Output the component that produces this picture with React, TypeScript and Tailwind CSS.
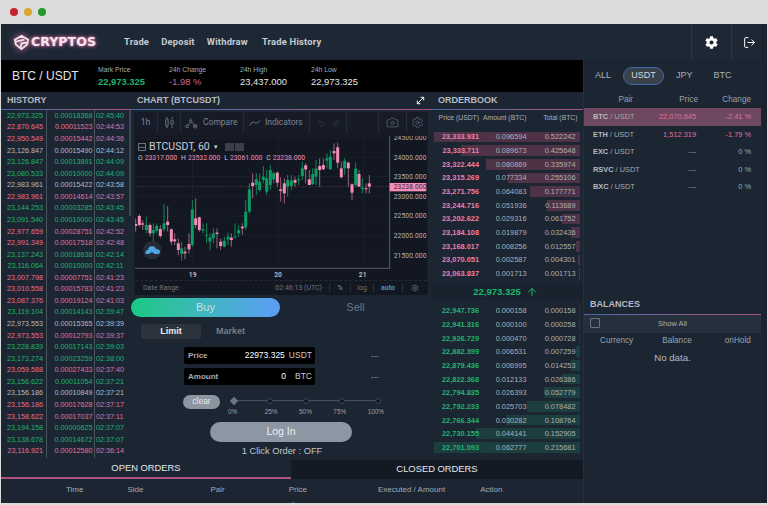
import React from 'react';
import { ArrowUp, Camera, LogOut, MoveDiagonal, Redo2, Settings, Undo2 } from 'lucide-react';
import { FaCog } from 'react-icons/fa';

type Side = 'g' | 'p' | 'w';

const history: [string, string, string, Side][] = [
  ['22,973.325', '0.00018368', '02:45:40', 'g'],
  ['22,870.645', '0.00011523', '02:44:53', 'p'],
  ['22,950.549', '0.00015442', '02:44:36', 'p'],
  ['23,126.847', '0.00015490', '02:44:12', 'w'],
  ['23,126.847', '0.00013891', '02:44:09', 'g'],
  ['23,080.533', '0.00010000', '02:44:09', 'g'],
  ['22,983.961', '0.00015422', '02:43:58', 'w'],
  ['22,983.961', '0.00014614', '02:43:57', 'p'],
  ['23,144.253', '0.00003285', '02:43:45', 'g'],
  ['23,091.540', '0.00010000', '02:43:45', 'g'],
  ['22,977.659', '0.00028751', '02:42:52', 'p'],
  ['22,991.349', '0.00017518', '02:42:48', 'p'],
  ['23,137.243', '0.00018638', '02:42:14', 'g'],
  ['23,116.064', '0.00010000', '02:42:11', 'g'],
  ['23,007.798', '0.00007751', '02:41:23', 'p'],
  ['23,010.558', '0.00015783', '02:41:23', 'p'],
  ['23,087.376', '0.00019124', '02:41:03', 'p'],
  ['23,119.104', '0.00014143', '02:39:47', 'g'],
  ['22,973.553', '0.00015365', '02:39:39', 'w'],
  ['22,973.553', '0.00012793', '02:39:37', 'p'],
  ['23,228.839', '0.00017143', '02:39:03', 'g'],
  ['23,173.274', '0.00023259', '02:38:00', 'g'],
  ['23,059.588', '0.00027433', '02:37:40', 'p'],
  ['23,156.622', '0.00011054', '02:37:21', 'g'],
  ['23,156.186', '0.00010849', '02:37:21', 'w'],
  ['23,156.186', '0.00017628', '02:37:17', 'p'],
  ['23,158.622', '0.00017037', '02:37:11', 'p'],
  ['23,194.158', '0.00000625', '02:37:07', 'g'],
  ['23,138.678', '0.00014672', '02:37:07', 'g'],
  ['23,116.921', '0.00012580', '02:36:14', 'p'],
];

const sideColor: Record<Side, string> = {
  g: 'text-[#1db56f]',
  p: 'text-[#e0719f]',
  w: 'text-[#b4bac2]',
};

// price, amount, total, depth bar width in px
const asks: [string, string, string, number][] = [
  ['23,333.931', '0.096594', '0.522242', 146],
  ['23,333.711', '0.089673', '0.425648', 119],
  ['23,322.444', '0.080869', '0.335974', 94],
  ['23,315.269', '0.077334', '0.255106', 72],
  ['23,271.756', '0.064083', '0.177771', 50],
  ['23,244.716', '0.051936', '0.113689', 33],
  ['23,202.622', '0.029316', '0.061752', 18],
  ['23,184.108', '0.019879', '0.032436', 9],
  ['23,168.017', '0.008256', '0.012557', 4],
  ['23,070.051', '0.002587', '0.004301', 2],
  ['23,063.837', '0.001713', '0.001713', 1],
];

const bids: [string, string, string, number][] = [
  ['22,947.736', '0.000158', '0.000158', 1],
  ['22,941.316', '0.000100', '0.000258', 1],
  ['22,926.729', '0.000470', '0.000728', 1],
  ['22,882.399', '0.006531', '0.007259', 4],
  ['22,879.436', '0.006995', '0.014253', 9],
  ['22,822.368', '0.012133', '0.026386', 18],
  ['22,794.835', '0.026393', '0.052779', 36],
  ['22,792.233', '0.025703', '0.078482', 53],
  ['22,766.344', '0.030282', '0.108764', 74],
  ['22,730.155', '0.044141', '0.152905', 104],
  ['22,701.093', '0.062777', '0.215681', 146],
];

const pairs = [
  { base: 'BTC', price: '22,070.645', change: '-2.41 %', down: true },
  { base: 'ETH', price: '1,512.319', change: '-1.79 %', down: true },
  { base: 'EXC', price: '---', change: '0 %', down: false },
  { base: 'RSVC', price: '---', change: '0 %', down: false },
  { base: 'BXC', price: '---', change: '0 %', down: false },
];

// x, wick top, wick bottom, body top, body bottom, colour (3x picture units)
type Candle = [number, number, number, number, number, 'g' | 'p'];

const lowerCandles: Candle[] = [
  [17, 55, 95, 72, 78, 'p'], [28, 42, 80, 48, 75, 'p'], [38, 60, 90, 70, 74, 'p'], [49, 50, 100, 75, 90, 'g'],
  [60, 70, 110, 75, 100, 'p'], [70, 70, 125, 90, 100, 'g'], [80, 70, 100, 78, 92, 'g'], [91, 75, 115, 87, 108, 'p'],
  [102, 12, 95, 70, 88, 'g'], [113, 18, 95, 65, 75, 'p'], [124, 85, 135, 88, 125, 'p'], [134, 100, 135, 118, 124, 'p'],
  [145, 115, 165, 130, 150, 'p'], [155, 125, 182, 145, 162, 'g'], [165, 140, 178, 155, 160, 'p'], [177, 100, 160, 132, 148, 'p'],
  [187, 0, 140, 28, 135, 'g'], [197, -5, 85, 55, 75, 'p'], [208, 50, 95, 52, 90, 'p'], [219, 70, 100, 88, 92, 'g'],
  [230, 70, 130, 104, 106, 'g'], [240, 100, 150, 112, 125, 'g'], [250, 85, 130, 100, 115, 'g'], [261, 85, 145, 98, 102, 'p'],
  [272, 115, 150, 125, 138, 'p'], [283, 110, 142, 122, 140, 'g'], [294, 98, 135, 110, 118, 'g'], [304, 100, 140, 113, 120, 'p'],
  [315, 70, 115, 110, 113, 'g'], [326, 75, 110, 90, 100, 'g'], [337, 70, 105, 80, 85, 'p'], [347, 0, 90, 35, 82, 'g'],
];

const upperCandles: Candle[] = [
  [358, 280, 370, 298, 365, 'g'], [368, 250, 325, 278, 288, 'p'], [379, 250, 315, 268, 285, 'g'], [389, 250, 305, 275, 300, 'g'],
  [400, 228, 280, 260, 270, 'g'], [410, 240, 315, 265, 305, 'g'], [421, 225, 300, 240, 285, 'g'], [431, 245, 280, 250, 268, 'g'],
  [442, 245, 290, 248, 278, 'p'], [452, 262, 335, 298, 303, 'p'], [463, 265, 340, 280, 310, 'p'], [473, 255, 320, 270, 290, 'g'],
  [484, 255, 300, 272, 288, 'g'], [495, 260, 290, 270, 278, 'p'], [506, 255, 285, 268, 270, 'g'], [517, 215, 270, 235, 258, 'g'],
  [527, 220, 280, 226, 238, 'p'], [538, 240, 285, 268, 285, 'p'], [548, 235, 285, 252, 282, 'g'], [558, 210, 285, 235, 260, 'g'],
  [569, 205, 290, 228, 240, 'p'], [580, 205, 240, 225, 238, 'p'], [591, 190, 235, 205, 212, 'g'], [601, 180, 240, 200, 238, 'g'],
  [612, 160, 210, 183, 190, 'p'], [623, 158, 235, 172, 218, 'p'], [634, 215, 265, 235, 262, 'p'], [644, 205, 255, 212, 235, 'g'],
  [655, 215, 290, 218, 235, 'p'], [666, 280, 330, 283, 308, 'p'], [677, 218, 290, 236, 285, 'g'], [687, 240, 290, 252, 290, 'p'],
  [697, 265, 310, 293, 297, 'g'], [708, 280, 310, 295, 298, 'p'], [718, 255, 310, 280, 290, 'p'],
];

const candles: Candle[] = [
  ...lowerCandles.map(([x, a, b, c, d, s]): Candle => [x, a + 330, b + 330, c + 330, d + 330, s]),
  ...upperCandles,
];

const axisPrices: [string, number][] = [
  ['24500.000', 144], ['24000.000', 202], ['23500.000', 260], ['23000.000', 320],
  ['22500.000', 378], ['22000.000', 436], ['21500.000', 498],
];

function Chart() {
  return (
    <svg viewBox="15 138 876 432" className="block w-[292px] h-[144px]">
      <rect x="15" y="138" width="876" height="432" fill="#131722" />
      {axisPrices.map(([, y]) => (
        <line key={y} x1="15" x2="778" y1={y} y2={y} stroke="#1f2431" strokeWidth="2" />
      ))}
      {[188, 444, 700].map((x) => (
        <line key={x} x1={x} x2={x} y1="138" y2="535" stroke="#1f2431" strokeWidth="2" />
      ))}
      <line x1="15" x2="778" y1="290" y2="290" stroke="#7a4a63" strokeWidth="2" strokeDasharray="2 3" />
      {candles.map(([x, a, b, c, d, s]) => {
        const color = s === 'g' ? '#0c9c63' : '#f48fb8';
        return (
          <g key={x}>
            <line x1={x} x2={x} y1={a} y2={b} stroke={s === 'g' ? '#0c9c63' : '#b86f90'} strokeWidth="2.5" />
            <rect x={x - 4.5} y={c} width="9" height={Math.max(d - c, 3)} fill={color} />
          </g>
        );
      })}
      <line x1="779" x2="779" y1="138" y2="536" stroke="#565b66" strokeWidth="3" />
      <line x1="15" x2="779" y1="535" y2="535" stroke="#565b66" strokeWidth="3" />
      {axisPrices.map(([label, y]) => (
        <text key={label} x="791" y={y + 7} fontSize="20" fill="#b2b5be" fontFamily="Roboto, sans-serif" letterSpacing="0.4">
          {label}
        </text>
      ))}
      <rect x="779" y="279" width="110" height="25" fill="#f48fb8" />
      <text x="791" y="298" fontSize="20" fill="#4a2436" fontFamily="Roboto, sans-serif" letterSpacing="0.4">
        23238.000
      </text>
      {[['19', 188], ['20', 444], ['21', 698]].map(([label, x]) => (
        <text key={label} x={x} y="561" textAnchor="middle" fontSize="20" fontWeight="700" fill="#b2b5be" fontFamily="Roboto, sans-serif">
          {label}
        </text>
      ))}
      <circle cx="67" cy="480" r="28" fill="#262b38" />
      <path
        d="M47 492 q-3 -11 7 -13 q2 -12 14 -10 q8 1 10 8 q11 0 12 8 q0 7 -9 7 l-8 0 q-5 -8 -12 -3 q-3 3 -6 3 z"
        fill="#4fa6e4"
      />
    </svg>
  );
}

function ToolDivider() {
  return <div className="w-px self-stretch bg-[#262c39]" />;
}

function PanelTitle({ children }: { children: React.ReactNode }) {
  return (
    <div className="h-[18px] shrink-0 flex flex-col">
      <div className="flex-1 flex items-center justify-between pl-[6px] pr-[5px] text-[9px] leading-none font-bold text-[#b4bac3]">
        {children}
      </div>
      <div className="h-px bg-gradient-to-r from-[#3f6aa8] to-[#a8527f]" />
    </div>
  );
}

function BookRow({ row, bar, price }: { row: [string, string, string, number]; bar: string; price: string }) {
  const [p, amount, total, width] = row;
  return (
    <div className="relative h-[13.68px] shrink-0 flex items-center text-[7.4px] text-[#aab0b8]">
      <div className={`absolute right-[3px] top-[1.5px] bottom-[1.5px] ${bar}`} style={{ width }} />
      <span className={`relative w-[47px] text-right font-bold ${price}`}>{p}</span>
      <span className="relative w-[47.5px] text-right">{amount}</span>
      <span className="relative w-[49px] text-right">{total}</span>
    </div>
  );
}

function History() {
  return (
    <div className="w-[130px] shrink-0 flex flex-col">
      <PanelTitle>HISTORY</PanelTitle>
      <div className="relative flex-1 flex flex-col pt-[0.5px]">
        <div className="absolute left-[128px] top-0 w-[2px] h-[106px] bg-[#3d4653]" />
        <div className="absolute left-[45px] top-0 bottom-[2px] w-px bg-[#4a5360]" />
        <div className="absolute left-[93px] top-0 bottom-[2px] w-px bg-[#4a5360]" />
        {history.map(([price, amount, time, side], i) => (
          <div key={i} className={`h-[11.57px] shrink-0 flex items-center text-[7.2px] ${sideColor[side]}`}>
            <span className="w-[42px] text-right">{price}</span>
            <span className="w-[49.5px] text-right">{amount}</span>
            <span className="ml-[3.5px] w-[30px]">{time}</span>
          </div>
        ))}
      </div>
    </div>
  );
}

function CenterPanel() {
  return (
    <div className="w-[301px] shrink-0 flex flex-col">
      <PanelTitle>
        <span>CHART (BTCUSDT)</span>
        <MoveDiagonal size={11} className="text-white mr-[1px]" />
      </PanelTitle>
      <div className="mx-[3px] mt-[2px] w-[294px] h-[183px] bg-[#161b27] rounded-[3px] flex flex-col">
        <div className="h-[21px] shrink-0 flex items-center text-[#7c8593] text-[8.5px] font-['Roboto',sans-serif]">
          <div className="w-[23px] text-center">1h</div>
          <ToolDivider />
          <div className="w-[22px] flex justify-center">
            <svg viewBox="0 0 14 14" className="w-[13px] h-[13px]" fill="none" stroke="#7c8593" strokeWidth="0.9">
              <rect x="3" y="3" width="2.5" height="8" rx="1" />
              <path d="M4.2 1v2M4.2 11v2M9.8 1v2M9.8 11v2" />
              <rect x="8.5" y="4.5" width="2.5" height="5" rx="1" />
            </svg>
          </div>
          <ToolDivider />
          <div className="w-[62px] flex items-center gap-[5px] pl-[4px]">
            <svg viewBox="0 0 16 14" className="w-[13px] h-[12px]" fill="none" stroke="#7c8593" strokeWidth="0.9">
              <circle cx="2.5" cy="11" r="1.7" />
              <circle cx="12.5" cy="11" r="2.2" />
              <circle cx="7" cy="5" r="1.5" />
              <path d="M4 10l2-3.5M8.3 6l3 3M7 1v2.5M12.5 10v2M11.5 11h2" />
            </svg>
            <span>Compare</span>
          </div>
          <ToolDivider />
          <div className="w-[65px] flex items-center gap-[4px] pl-[5px]">
            <svg viewBox="0 0 14 8" className="w-[12px] h-[8px]" fill="none" stroke="#7c8593" strokeWidth="0.9">
              <path d="M1 7 Q3 2 5 3 T9 4 T13 1" />
            </svg>
            <span>Indicators</span>
          </div>
          <ToolDivider />
          <div className="w-[36px] flex justify-center gap-[7px] text-[#363c49]">
            <Undo2 size={8} />
            <Redo2 size={8} />
          </div>
          <ToolDivider />
          <div className="w-[31px]" />
          <ToolDivider />
          <div className="w-[27px] flex justify-center">
            <Camera size={13} strokeWidth={1} />
          </div>
          <ToolDivider />
          <div className="flex-1 flex justify-center">
            <Settings size={13} strokeWidth={1} />
          </div>
        </div>
        <div className="h-[3px] shrink-0" />
        <div className="ml-[1px] relative w-[292px]">
          <Chart />
          <div className="absolute left-[3px] top-[6px] flex items-center gap-[3px] text-[#c9ccd3] text-[10.5px] leading-none font-['Roboto',sans-serif]">
            <div className="w-[8px] h-[8px] border border-[#6b7280] flex items-center">
              <div className="w-full h-px bg-[#6b7280]" />
            </div>
            <span>BTCUSDT, 60</span>
            <span className="text-[6px]">▼</span>
            <div className="ml-[3px] flex gap-px">
              <div className="w-[9px] h-[8px] bg-[#3a3f4b]" />
              <div className="w-[9px] h-[8px] bg-[#3a3f4b]" />
            </div>
          </div>
          <div className="absolute left-[3px] top-[19px] text-[6.8px] leading-none whitespace-nowrap font-['Roboto',sans-serif] text-[#c9ccd3] flex gap-[2px]">
            <span>O</span>
            <span className="text-[#f48fb8] mr-[2px]">23317.000</span>
            <span>H</span>
            <span className="text-[#f48fb8] mr-[2px]">23532.000</span>
            <span>L</span>
            <span className="text-[#f48fb8] mr-[2px]">23061.000</span>
            <span>C</span>
            <span className="text-[#f48fb8]">23238.000</span>
          </div>
        </div>
        <div className="ml-[1px] w-[292px] flex-1 bg-[#131722] border-t border-dashed border-[#242a37] flex items-center pl-[8px] text-[7px] text-[#6d7685] font-['Roboto',sans-serif]">
          <span>Date Range</span>
          <span className="ml-auto mr-[7px] whitespace-nowrap">02:46:13 (UTC)</span>
          <div className="w-[21px] h-[8px] border-l border-[#2c3240] flex items-center justify-center font-bold">%</div>
          <div className="w-[23px] h-[8px] border-l border-[#2c3240] flex items-center justify-center">log</div>
          <div className="w-[29px] h-[8px] border-l border-[#2c3240] flex items-center justify-center font-bold text-[#3f93d6]">auto</div>
          <div className="w-[25px] h-[8px] border-l border-[#2c3240] flex items-center justify-center">
            <Settings size={8} />
          </div>
        </div>
      </div>
      <div className="mt-[3px] h-[19px] shrink-0 flex items-center text-[11px]">
        <div className="w-[149px] h-full rounded-full bg-gradient-to-r from-[#17c97f] to-[#5b9cf5] flex items-center justify-center text-[#c7dfe6]">
          Buy
        </div>
        <div className="w-[151px] text-center text-[#6c7580]">Sell</div>
      </div>
      <div className="mt-[7px] ml-[10px] flex text-[9px] font-bold h-[15px] shrink-0">
        <div className="w-[60px] rounded-[2px] bg-[#2d333c] flex items-center justify-center text-[#e8eaed]">Limit</div>
        <div className="w-[59px] flex items-center justify-center text-[#747d88]">Market</div>
      </div>
      <div className="mt-[8px] ml-[53px] flex flex-col gap-[4px] shrink-0">
        {[
          ['Price', '22973.325', 'USDT'],
          ['Amount', '0', 'BTC'],
        ].map(([label, value, unit]) => (
          <div key={label} className="flex items-center">
            <div className="w-[131px] h-[17px] bg-black rounded-[2px] flex items-center pl-[4px] pr-[3px] text-[8.5px] text-[#c8ccd2]">
              <span className="text-[8px] font-bold text-[#a6acb4]">{label}</span>
              <span className="ml-auto text-white">{value}</span>
              <span className={unit === 'BTC' ? 'ml-[9px]' : 'ml-[4px]'}>{unit}</span>
            </div>
            <span className="ml-[56px] text-[8px] text-[#9aa1aa]">---</span>
          </div>
        ))}
      </div>
      <div className="mt-[9.5px] ml-[52px] flex shrink-0">
        <div className="w-[37px] h-[14px] rounded-full bg-[#8c95a0] flex items-center justify-center text-[8.5px] text-[#e6e9ec]">
          clear
        </div>
        <div className="ml-[9px] w-[154px] flex flex-col">
          <div className="relative h-[12px] flex items-center justify-between px-[2px]">
            <div className="absolute left-[2px] right-[3px] top-[5.5px] h-px bg-[#475060]" />
            <div className="relative w-[6px] h-[6px] rotate-45 bg-[#6b7380]" />
            {[0, 1, 2, 3].map((i) => (
              <div key={i} className="relative w-[6px] h-[6px] rounded-full bg-[#12171f] border border-[#3e4754]" />
            ))}
          </div>
          <div className="flex justify-between text-[6.4px] text-[#9aa1aa] leading-none mt-[2px] -mx-[1px]">
            <span>0%</span>
            <span className="ml-[6px]">25%</span>
            <span>50%</span>
            <span>75%</span>
            <span>100%</span>
          </div>
        </div>
      </div>
      <div className="mt-[7px] ml-[79px] w-[142px] h-[20px] rounded-full bg-[#8d96a3] flex items-center justify-center text-[10.5px] text-[#eceef1] shrink-0">
        Log In
      </div>
      <div className="mt-[2px] text-center text-[9.3px] leading-[14px] text-[#c0c5cb] ml-[1px] shrink-0">
        1 Click Order : OFF
      </div>
    </div>
  );
}

function OrderBook() {
  return (
    <div className="flex-1 flex flex-col">
      <PanelTitle>ORDERBOOK</PanelTitle>
      <div className="h-[17px] shrink-0 flex items-center text-[6.8px] text-[#aab0b8]">
        <span className="w-[47px] text-right whitespace-nowrap">Price (USDT)</span>
        <span className="w-[47.5px] text-right whitespace-nowrap">Amount (BTC)</span>
        <span className="w-[51px] text-right whitespace-nowrap">Total (BTC)</span>
      </div>
      <div className="mt-[3px] flex flex-col">
        {asks.map((row) => (
          <BookRow key={row[0]} row={row} bar="bg-[#4e3347]" price="text-[#ec7fa9]" />
        ))}
      </div>
      <div className="mt-[3.5px] h-[16px] shrink-0 bg-[#19232e] flex items-center justify-center gap-[5px] text-[9.5px] font-bold text-[#1db56f]">
        <span className="ml-[-4px]">22,973.325</span>
        <ArrowUp size={12} strokeWidth={2} />
      </div>
      <div className="mt-[4px] flex flex-col">
        {bids.map((row) => (
          <BookRow key={row[0]} row={row} bar="bg-[#1c3e3f]" price="text-[#1db56f]" />
        ))}
      </div>
    </div>
  );
}

function Orders() {
  return (
    <div className="h-[43px] shrink-0 flex flex-col overflow-hidden">
      <div className="h-[19px] shrink-0 flex text-[9.4px] text-[#e6e9ec]">
        <div className="w-[290px] flex items-center justify-center border-b-2 border-[#b0527f]">OPEN ORDERS</div>
        <div className="flex-1 bg-[#141a24] flex items-center justify-center">CLOSED ORDERS</div>
      </div>
      <div className="relative h-[21px] shrink-0 text-[8px] text-[#a4aab2] flex items-center whitespace-nowrap">
        <span className="ml-[65px]">Time</span>
        <span className="ml-[44px]">Side</span>
        <span className="ml-[67px]">Pair</span>
        <span className="ml-[64px]">Price</span>
        <span className="ml-[71px]">Executed / Amount</span>
        <span className="ml-[35px]">Action</span>
      </div>
      <div className="text-center text-[8.5px] leading-[12px] text-[#a4aab2]">No data.</div>
    </div>
  );
}

function Sidebar() {
  return (
    <div className="w-[178px] shrink-0 flex flex-col border-l border-[#262f3b]">
      <div className="h-[32px] shrink-0 flex items-center text-[9px] text-[#aab0b8]">
        <span className="ml-[11px]">ALL</span>
        <span className="ml-[12px] w-[41px] h-[18px] rounded-full bg-[#3a4149] border border-[#3f6aa8] flex items-center justify-center text-[#d8dbdf]">
          USDT
        </span>
        <span className="ml-[12px]">JPY</span>
        <span className="ml-[21px]">BTC</span>
      </div>
      <div className="h-[16px] shrink-0 flex items-center text-[8.2px] text-[#9aa1aa] pr-[10px]">
        <span className="w-[49px] text-right">Pair</span>
        <span className="w-[65px] text-right">Price</span>
        <span className="flex-1 text-right">Change</span>
      </div>
      <div className="flex flex-col">
        {pairs.map(({ base, price, change, down }, i) => (
          <div
            key={base}
            className={`h-[17.5px] shrink-0 flex items-center pl-[9px] pr-[10px] text-[7.4px] ${i === 0 ? 'bg-[#6e4860]' : ''}`}
          >
            <span className="w-[65px] text-[#a2a8b0] whitespace-nowrap">
              <span className="font-bold text-[#b6bbc2]">{base}</span> / USDT
            </span>
            <span className={`w-[38px] text-right whitespace-nowrap ${down ? 'text-[#e0719f]' : 'text-[#a2a8b0]'}`}>{price}</span>
            <span className={`flex-1 text-right ${down ? 'text-[#e0719f]' : 'text-[#a2a8b0]'}`}>{change}</span>
          </div>
        ))}
      </div>
      <div className="mt-[100px] flex flex-col">
        <div className="h-[18px] flex items-center pl-[6px] text-[9px] font-bold text-[#b4bac3]">BALANCES</div>
        <div className="h-px bg-gradient-to-r from-[#3f6aa8] to-[#a8527f]" />
        <div className="relative h-[18px] bg-[#25303c] flex items-center justify-center text-[7.6px] text-[#aab0b8]">
          <div className="absolute left-[6px] top-[3px] w-[10px] h-[10px] border border-[#69727e] rounded-[1px]" />
          <span>Show All</span>
        </div>
        <div className="h-[18px] flex items-center text-[8.2px] text-[#9aa1aa]">
          <span className="ml-[16px]">Currency</span>
          <span className="ml-[29px]">Balance</span>
          <span className="ml-[33px]">onHold</span>
        </div>
        <div className="-mt-[1px] text-center text-[9.6px] leading-[16px] text-[#b4bac2]">No data.</div>
      </div>
    </div>
  );
}

export default function App() {
  return (
    <div className="w-[768px] h-[505px] overflow-hidden flex flex-col bg-[#dcdcdc] font-['Liberation_Sans',Arial,sans-serif]">
      <div className="h-[24px] shrink-0 flex items-center gap-[6px] pl-[10px] pb-[1px]">
        <div className="w-[8px] h-[8px] rounded-full bg-[#c9202c]" />
        <div className="w-[8px] h-[8px] rounded-full bg-[#d9a62e]" />
        <div className="w-[8px] h-[8px] rounded-full bg-[#1f9a2b]" />
      </div>
      <div className="mx-px w-[766px] h-[479px] shrink-0 bg-[#1c2632] flex flex-col rounded-tr-[2px]">
        <header className="h-[36px] shrink-0 flex items-center bg-[#1e2835]">
          <svg viewBox="0 0 18 18" className="ml-[12px] w-[17px] h-[17px] drop-shadow-[0_0_3px_#e879b0]" fill="none" stroke="#f3dfe9" strokeWidth="2">
            <path d="M9 2 L16 6 L15 11 L9 16 L3 11 L2 6 Z M3 8 L12 6 M8 15 L9 10 L15 9" />
          </svg>
          <span className="ml-[1px] w-[68px] text-[12.6px] leading-none font-bold text-[#f1e6ec] font-['DejaVu_Sans',sans-serif] [text-shadow:0_0_4px_#e879b0,0_0_2px_#e879b0]">
            CRYPTOS
          </span>
          <nav className="ml-[25px] flex gap-[12px] text-[9.4px] font-bold tracking-[0.2px] text-[#c6cbd1] font-['Roboto',sans-serif]">
            <span>Trade</span>
            <span>Deposit</span>
            <span>Withdraw</span>
            <span className="ml-[2px]">Trade History</span>
          </nav>
          <div className="ml-auto self-stretch w-[40px] border-l border-[#2b3542] flex items-center justify-center text-white">
            <FaCog size={13} />
          </div>
          <div className="self-stretch w-[36px] border-l border-[#2b3542] flex items-center justify-center text-white">
            <LogOut size={13} strokeWidth={1.8} />
          </div>
        </header>
        <div className="flex-1 flex min-h-0">
          <div className="w-[582px] shrink-0 flex flex-col">
            <div className="h-[32px] shrink-0 bg-black flex items-center">
              <span className="ml-[11px] w-[86px] text-[12px] mb-[1px] text-[#e4e6e9]">BTC / USDT</span>
              {[
                ['Mark Price', '22,973.325', 'text-[#1db56f] font-bold'],
                ['24h Change', '-1.98 %', 'text-[#d9648f]'],
                ['24h High', '23,437.000', 'text-[#e4e6e9]'],
                ['24h Low', '22,973.325', 'text-[#e4e6e9]'],
              ].map(([label, value, color]) => (
                <div key={label} className="w-[71px] flex flex-col">
                  <span className="text-[6.8px] leading-[10px] text-[#a4aab2]">{label}</span>
                  <span className={`text-[9.4px] leading-[13px] ${color}`}>{value}</span>
                </div>
              ))}
            </div>
            <div className="flex-1 flex min-h-0">
              <History />
              <CenterPanel />
              <OrderBook />
            </div>
            <Orders />
          </div>
          <Sidebar />
          <div className="flex-1 -mt-[36px] bg-[#1a232e]" />
        </div>
      </div>
    </div>
  );
}
